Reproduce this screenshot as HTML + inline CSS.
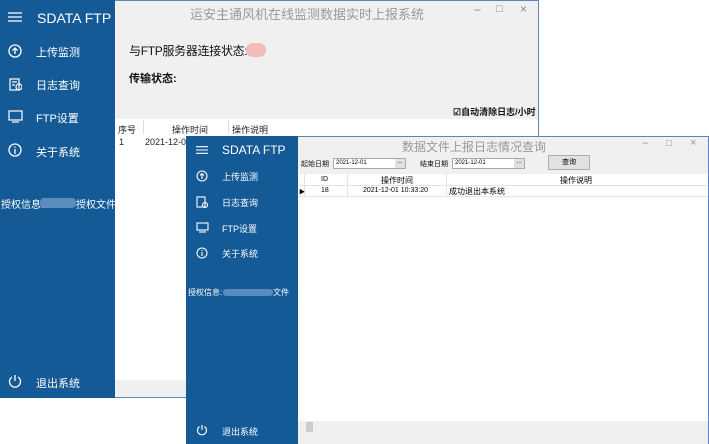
<!DOCTYPE html>
<html><head><meta charset="utf-8"><style>
*{margin:0;padding:0;box-sizing:border-box}
body{width:709px;height:444px;background:#fff;position:relative;overflow:hidden;font-family:"Liberation Sans","Noto Sans CJK SC",sans-serif;}
.abs{position:absolute}
.side{background:#145a96;color:#fff}
.t{position:absolute;white-space:nowrap}
.w{color:#fff}
svg{position:absolute}
</style></head><body>
<!-- window 1 -->
<div class="abs" style="left:0;top:0;width:539px;height:398px;border-right:1px solid #5b86b8;border-bottom:1px solid #5b86b8;border-top:1px solid #5b86b8"></div>
<div class="abs" style="left:115px;top:1px;width:423px;height:118px;background:#f0f0f0"></div>
<div class="abs" style="left:115px;top:380px;width:423px;height:17px;background:#f0f0f0"></div>
<div class="abs side" style="left:0;top:0;width:115px;height:398px"></div>
<div class="t" style="left:190px;top:4px;font-size:13px;color:#999">运安主通风机在线监测数据实时上报系统</div>
<div class="t" style="left:474px;top:2px;font-size:12px;color:#888">&#8211;</div>
<div class="t" style="left:496px;top:3px;font-size:11px;color:#888">&#9633;</div>
<div class="t" style="left:520px;top:2px;font-size:12px;color:#888">&#215;</div>
<div class="t" style="left:129px;top:42px;font-size:12px;color:#111;letter-spacing:-0.3px">与FTP服务器连接状态:</div>
<div class="abs" style="left:246px;top:43px;width:20px;height:14px;border-radius:7px;background:#f4b9b9"></div>
<div class="t" style="left:129px;top:70px;font-size:11px;font-weight:bold;color:#111">传输状态:</div>
<div class="t" style="left:453px;top:105px;font-size:9px;font-weight:bold;color:#111">&#9745;自动清除日志/小时</div>
<div class="t" style="left:118px;top:123px;font-size:9px;color:#222">序号</div>
<div class="abs" style="left:143px;top:120px;width:1px;height:14px;background:#ddd"></div>
<div class="t" style="left:172px;top:123px;font-size:9px;color:#222">操作时间</div>
<div class="abs" style="left:228px;top:120px;width:1px;height:14px;background:#ddd"></div>
<div class="t" style="left:232px;top:123px;font-size:9px;color:#222">操作说明</div>
<div class="t" style="left:119px;top:137px;font-size:9px;color:#222">1</div>
<div class="t" style="left:145px;top:137px;font-size:9px;color:#222">2021-12-01 1</div>
<div class="t w" style="left:37px;top:10px;font-size:14px">SDATA FTP</div>
<svg style="left:8px;top:12px" width="14" height="10"><path d="M0 1h14M0 5h14M0 9h14" stroke="#fff" stroke-width="1.3"/></svg>
<svg style="left:8px;top:44px" width="14" height="14" fill="none" stroke="#fff" stroke-width="1.3"><circle cx="7" cy="7" r="6"/><path d="M7 10V4M4.5 6.5L7 4l2.5 2.5"/></svg>
<div class="t w" style="left:36px;top:44px;font-size:11px">上传监测</div>
<svg style="left:9px;top:77px" width="13" height="14" fill="none" stroke="#fff" stroke-width="1.2"><rect x="1" y="2" width="9" height="11"/><path d="M3 5h5M3 8h3"/><circle cx="10" cy="10" r="3"/></svg>
<div class="t w" style="left:36px;top:77px;font-size:11px">日志查询</div>
<svg style="left:8px;top:110px" width="15" height="13" fill="none" stroke="#fff" stroke-width="1.2"><rect x="1" y="1" width="13" height="9"/><path d="M4 12h7"/></svg>
<div class="t w" style="left:36px;top:110px;font-size:11px">FTP设置</div>
<svg style="left:8px;top:143px" width="14" height="14" fill="none" stroke="#fff" stroke-width="1.3"><circle cx="7" cy="7" r="6"/><path d="M7 6v5M7 3.5v1.3"/></svg>
<div class="t w" style="left:36px;top:144px;font-size:11px">关于系统</div>
<div class="t w" style="left:1px;top:196px;font-size:10px">授权信息:</div>
<div class="abs" style="left:40px;top:198px;width:36px;height:10px;background:#5a8cc0;border-radius:4px"></div>
<div class="t w" style="left:76px;top:196px;font-size:10px">授权文件</div>
<svg style="left:8px;top:374px" width="14" height="14" fill="none" stroke="#fff" stroke-width="1.3"><path d="M4 3A5.5 5.5 0 1 0 10 3"/><path d="M7 1v6"/></svg>
<div class="t w" style="left:36px;top:375px;font-size:11px">退出系统</div>

<!-- window 2 -->
<div class="abs" style="left:186px;top:136px;width:523px;height:308px;background:#fff;border:1px solid #5b86b8"></div>
<div class="abs" style="left:298px;top:137px;width:410px;height:37px;background:#f0f0f0"></div>
<div class="abs" style="left:298px;top:421px;width:410px;height:23px;background:#f0f0f0"></div>
<div class="abs" style="left:306px;top:422px;width:7px;height:10px;background:#cdcdcd"></div>
<div class="abs side" style="left:186px;top:136px;width:112px;height:308px"></div>
<div class="t" style="left:402px;top:138px;font-size:12px;color:#999">数据文件上报日志情况查询</div>
<div class="t" style="left:642px;top:137px;font-size:11px;color:#999">&#8211;</div>
<div class="t" style="left:666px;top:138px;font-size:10px;color:#999">&#9633;</div>
<div class="t" style="left:690px;top:137px;font-size:11px;color:#999">&#215;</div>
<div class="t" style="left:301px;top:159px;font-size:7px;color:#111">起始日期</div>
<div class="abs" style="left:333px;top:158px;width:73px;height:11px;background:#fff;border:1px solid #aaa;font-size:6px;padding-left:2px;line-height:9px">2021-12-01</div>
<div class="abs" style="left:395px;top:159px;width:10px;height:9px;background:#e1e1e1;font-size:6px;line-height:7px;text-align:center">...</div>
<div class="t" style="left:420px;top:159px;font-size:7px;color:#111">结束日期</div>
<div class="abs" style="left:452px;top:158px;width:73px;height:11px;background:#fff;border:1px solid #aaa;font-size:6px;padding-left:2px;line-height:9px">2021-12-01</div>
<div class="abs" style="left:514px;top:159px;width:10px;height:9px;background:#e1e1e1;font-size:6px;line-height:7px;text-align:center">...</div>
<div class="abs" style="left:548px;top:155px;width:42px;height:15px;background:#e1e1e1;border:1px solid #adadad;font-size:7px;text-align:center;line-height:13px">查询</div>
<div class="abs" style="left:298px;top:185px;width:410px;height:1px;background:#e4e4e4"></div>
<div class="abs" style="left:298px;top:196px;width:410px;height:1px;background:#e4e4e4"></div>
<div class="abs" style="left:304px;top:174px;width:1px;height:22px;background:#e4e4e4"></div>
<div class="abs" style="left:347px;top:174px;width:1px;height:22px;background:#e4e4e4"></div>
<div class="abs" style="left:446px;top:174px;width:1px;height:22px;background:#e4e4e4"></div>
<div class="t" style="left:321px;top:176px;font-size:7px">ID</div>
<div class="t" style="left:381px;top:175px;font-size:8px">操作时间</div>
<div class="t" style="left:560px;top:175px;font-size:8px">操作说明</div>
<div class="t" style="left:299px;top:187px;font-size:6px">&#9654;</div>
<div class="t" style="left:321px;top:187px;font-size:7px">18</div>
<div class="t" style="left:363px;top:187px;font-size:7px">2021-12-01 10:33:20</div>
<div class="t" style="left:449px;top:186px;font-size:8px">成功退出本系统</div>
<div class="t w" style="left:222px;top:143px;font-size:12px">SDATA FTP</div>
<svg style="left:196px;top:146px" width="12" height="8"><path d="M0 .7h12M0 4h12M0 7.3h12" stroke="#fff" stroke-width="1.1"/></svg>
<svg style="left:196px;top:170px" width="12" height="12" fill="none" stroke="#fff" stroke-width="1.1"><circle cx="6" cy="6" r="5"/><path d="M6 9V3.5M4 5.5L6 3.5l2 2"/></svg>
<div class="t w" style="left:222px;top:170px;font-size:9px">上传监测</div>
<svg style="left:196px;top:196px" width="12" height="12" fill="none" stroke="#fff" stroke-width="1.1"><rect x="1" y="1" width="8" height="10"/><circle cx="9" cy="9" r="2.5"/></svg>
<div class="t w" style="left:222px;top:196px;font-size:9px">日志查询</div>
<svg style="left:196px;top:222px" width="13" height="11" fill="none" stroke="#fff" stroke-width="1.1"><rect x="1" y="1" width="11" height="7"/><path d="M3 10h7"/></svg>
<div class="t w" style="left:222px;top:222px;font-size:9px">FTP设置</div>
<svg style="left:196px;top:247px" width="12" height="12" fill="none" stroke="#fff" stroke-width="1.1"><circle cx="6" cy="6" r="5"/><path d="M6 5v4M6 3v1"/></svg>
<div class="t w" style="left:222px;top:247px;font-size:9px">关于系统</div>
<div class="t w" style="left:188px;top:287px;font-size:8px">授权信息:</div>
<div class="abs" style="left:223px;top:289px;width:50px;height:7px;background:#5a8cc0;border-radius:3px"></div>
<div class="t w" style="left:273px;top:287px;font-size:8px">文件</div>
<svg style="left:196px;top:424px" width="12" height="12" fill="none" stroke="#fff" stroke-width="1.1"><path d="M3.5 2.5A4.5 4.5 0 1 0 8.5 2.5"/><path d="M6 1v5"/></svg>
<div class="t w" style="left:222px;top:425px;font-size:9px">退出系统</div>
</body></html>
